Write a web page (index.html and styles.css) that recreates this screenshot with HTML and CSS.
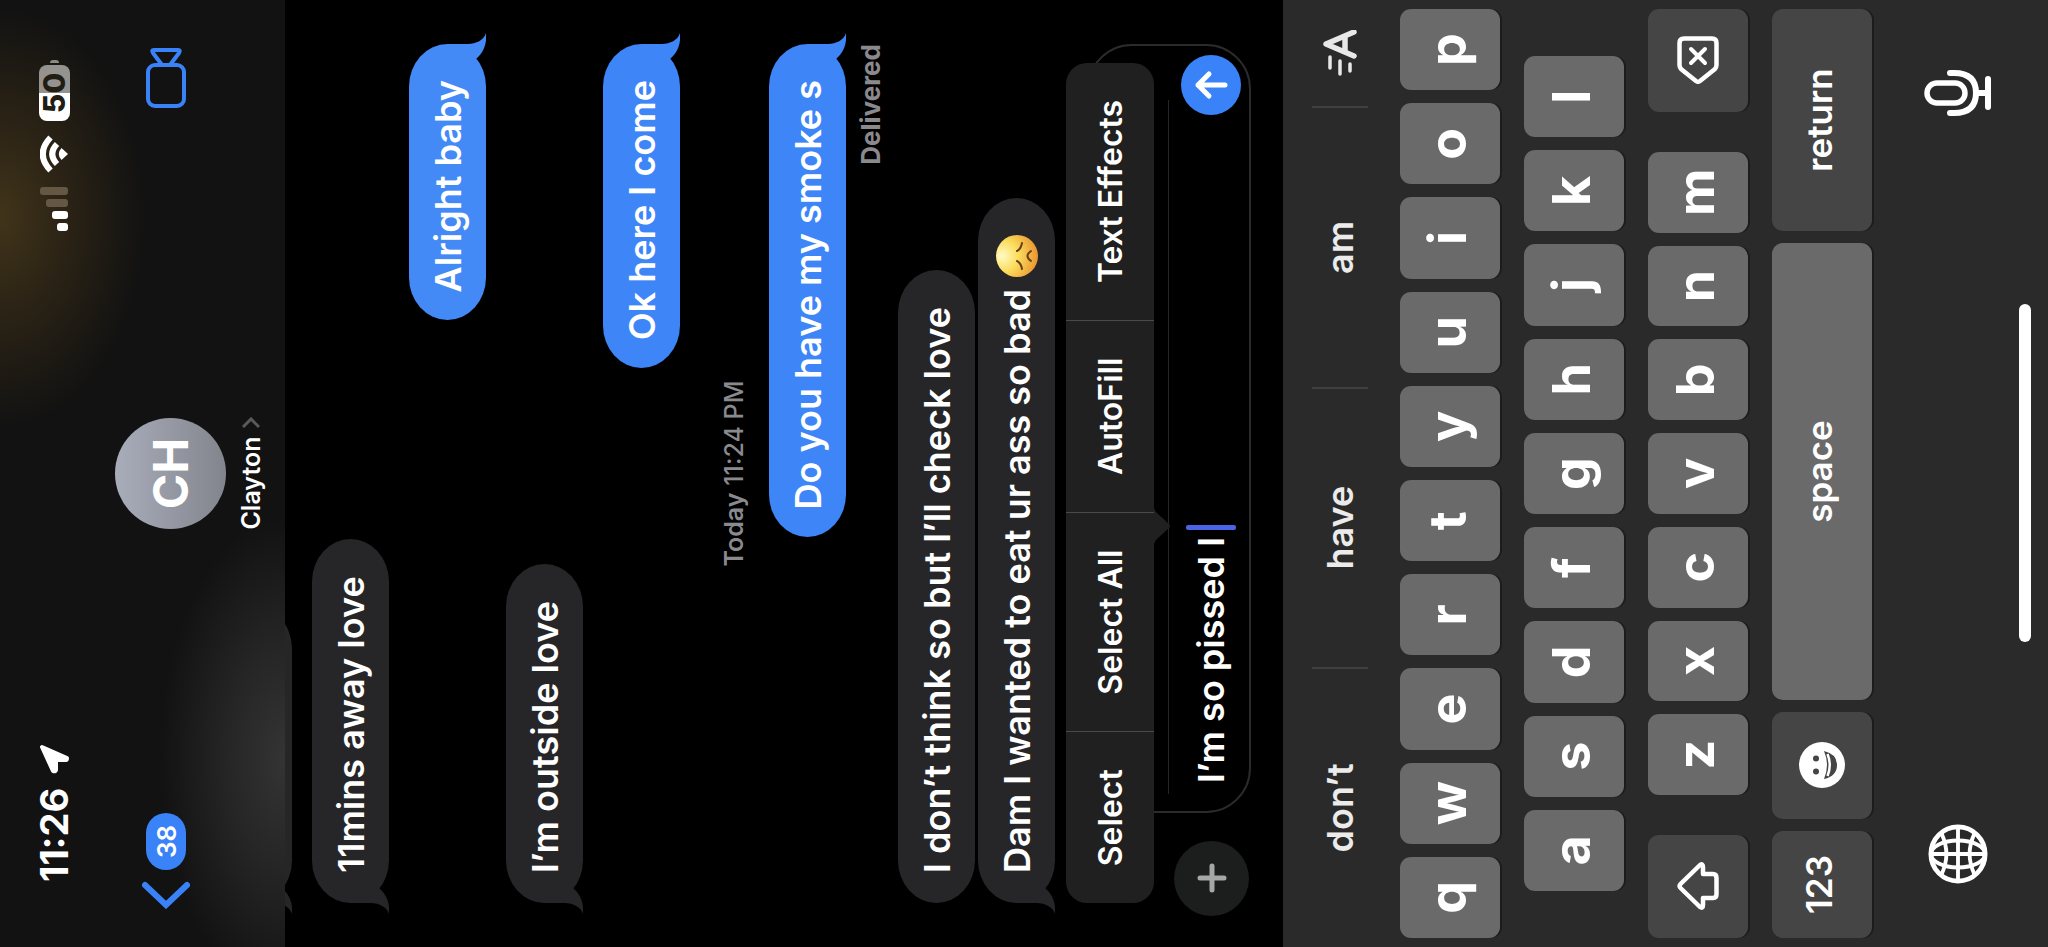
FILE: index.html
```html
<!DOCTYPE html>
<html lang="en">
<head>
<meta charset="utf-8">
<title>Clayton</title>
<link rel="stylesheet" href="styles.css">
</head>
<body>
<svg class="defs" width="0" height="0" aria-hidden="true">
  <symbol id="tail" viewBox="0 0 28 38"><path d="M0 0H17V20C17 28 21 36 28 38C18 39 9 36 3 29L0 26Z"/></symbol>
</svg>
<div class="stage">
<main class="phone">
  <header class="header">
    <div class="status">
      <time class="clock">11:26</time>
      <svg class="location" width="30" height="31" viewBox="0 0 30 31"><path d="M27 3 16 28Q14 28 14 27V17H4Q2 16 3 14Z" fill="#fff" stroke="#fff" stroke-width="4" stroke-linejoin="round"/></svg>
      <div class="indicators">
        <svg width="44" height="28" viewBox="0 0 44 28" fill="#fff"><rect y="17" width="8" height="11" rx="3"/><rect x="12" y="12" width="8" height="16" rx="3"/><g fill="#645844"><rect x="24" y="6" width="8" height="22" rx="3"/><rect x="36" width="8" height="28" rx="3"/></g></svg>
        <svg width="38" height="28" viewBox="0 0 38 28"><path d="M2.500 10.500Q19-5 35.500 10.500M9 17Q19 7.500 29 17" fill="none" stroke="#fff" stroke-width="6"/><path d="M19 28 13 21.500Q19 16 25 21.500Z" fill="#fff"/></svg>
        <div class="battery-wrap"><span class="battery">50</span><i class="battery-cap"></i></div>
      </div>
    </div>
    <nav class="nav">
      <button class="back" aria-label="Back, 38 unread">
        <svg width="28" height="48" viewBox="0 0 28 48"><path d="M24 3 4 24 24 45" fill="none" stroke="#3a82f7" stroke-width="6" stroke-linecap="round" stroke-linejoin="miter"/></svg>
        <span class="badge">38</span>
      </button>
      <button class="contact">
        <span class="avatar">CH</span>
        <span class="name">Clayton <svg width="11" height="18" viewBox="0 0 11 18"><path d="M1 1 9 9 1 17" fill="none" stroke="#5a5a5a" stroke-width="3"/></svg></span>
      </button>
      <button class="video" aria-label="Video call">
        <svg width="60" height="40" viewBox="0 0 60 40" fill="none" stroke="#3a82f7" stroke-width="4" stroke-linejoin="round"><rect x="2" y="2" width="41" height="36" rx="7"/><path d="M43 16 55 7Q58 5 58 8V32Q58 35 55 33L43 24"/></svg>
      </button>
    </nav>
  </header>

  <section class="thread">
    <p class="bubble in cut" aria-hidden="true"><svg class="tail"><use href="#tail"/></svg></p>
    <p class="bubble in">11mins away love<svg class="tail"><use href="#tail"/></svg></p>
    <p class="bubble out first">Alright baby<svg class="tail"><use href="#tail"/></svg></p>
    <p class="bubble in">I’m outside love<svg class="tail"><use href="#tail"/></svg></p>
    <p class="bubble out">Ok here I come<svg class="tail"><use href="#tail"/></svg></p>
    <p class="stamp"><b>Today</b> 11:24 PM</p>
    <p class="bubble out last">Do you have my smoke s<svg class="tail"><use href="#tail"/></svg></p>
    <p class="receipt">Delivered</p>
    <p class="bubble in stacked">I don’t think so but I’ll check love</p>
    <p class="bubble in stacked">Dam I wanted to eat ur ass so bad
      <svg class="emoji" width="42" height="42" viewBox="0 0 42 42" role="img" aria-label="disappointed face">
        <defs><radialGradient id="face" cx=".5" cy=".15" r=".85"><stop offset="0" stop-color="#fffbc4"/><stop offset=".45" stop-color="#fbdc5b"/><stop offset="1" stop-color="#ea9430"/></radialGradient></defs>
        <circle cx="21" cy="21" r="21" fill="url(#face)"/><path d="M8 26Q14 25 16 21M34 26Q28 25 26 21M16 35Q21 28 26 35" fill="none" stroke="#65401a" stroke-width="2" stroke-linecap="round"/>
      </svg><svg class="tail"><use href="#tail"/></svg></p>
  </section>

  <form class="composer">
    <button type="button" class="plus" aria-label="Add"><svg width="30" height="30" viewBox="0 0 30 30"><path d="M15 3V27M3 15H27" stroke="#a6a6a6" stroke-width="5" stroke-linecap="round"/></svg></button>
    <div class="field">
      <div class="subject"></div>
      <div class="entry">
        <input class="text" type="text" aria-label="Message" value="I’m so pissed I"><i class="caret"></i>
        <button type="button" class="send" aria-label="Send"><svg width="34" height="34" viewBox="0 0 34 34"><path d="M17 31V4M6 15 17 4 28 15" fill="none" stroke="#fff" stroke-width="5" stroke-linecap="round" stroke-linejoin="round"/></svg></button>
      </div>
    </div>
    <div class="menu">
      <button type="button">Select</button><button type="button">Select All</button><button type="button">AutoFill</button><button type="button">Text Effects</button>
      <svg class="pointer" width="40" height="17" viewBox="0 0 40 17"><path d="M0 0Q5 0 8 4L18 15Q20 17 22 15L32 4Q35 0 40 0Z" fill="#202020"/></svg>
    </div>
  </form>

  <section class="keyboard">
    <div class="suggestions">
      <button>don’t</button><button>have</button><button>am</button>
      <button class="format" aria-label="Text formatting"><svg width="46" height="34" viewBox="0 0 46 34" fill="none" stroke="#e8e8e8" stroke-linecap="round" stroke-linejoin="round"><path d="M20 31 32 3 44 31M24 22H40" stroke-width="5.500"/><path d="M8 7H19M2 17H15M5 27H12" stroke-width="3.500"/></svg></button>
    </div>
    <div class="row"><button class="key">q</button><button class="key">w</button><button class="key">e</button><button class="key">r</button><button class="key">t</button><button class="key">y</button><button class="key">u</button><button class="key">i</button><button class="key">o</button><button class="key">p</button></div>
    <div class="row inset"><button class="key">a</button><button class="key">s</button><button class="key">d</button><button class="key">f</button><button class="key">g</button><button class="key">h</button><button class="key">j</button><button class="key">k</button><button class="key">l</button></div>
    <div class="row shifted">
      <button class="key dark side" aria-label="Shift"><svg width="48" height="42" viewBox="0 0 48 42"><path d="M22 3.500Q24 1.500 26 3.500L45 23Q47 26 43 26H36V36Q36 39.500 32 39.500H16Q12 39.500 12 36V26H5Q1 26 3 23Z" fill="none" stroke="#fff" stroke-width="4.500" stroke-linejoin="round"/></svg></button>
      <div class="letters"><button class="key">z</button><button class="key">x</button><button class="key">c</button><button class="key">v</button><button class="key">b</button><button class="key">n</button><button class="key">m</button></div>
      <button class="key dark side" aria-label="Delete"><svg width="48" height="42" viewBox="0 0 48 42" fill="none" stroke="#fff" stroke-linecap="round" stroke-linejoin="round"><path d="M19 2.500H41Q45.500 2.500 45.500 7V35Q45.500 39.500 41 39.500H19Q17 39.500 15 38L3 23Q1.500 21 3 19L15 4Q17 2.500 19 2.500Z" stroke-width="4.500"/><path d="M21 14 35 28M35 14 21 28" stroke-width="4"/></svg></button>
    </div>
    <div class="row bottom">
      <button class="key dark word">123</button>
      <button class="key dark" aria-label="Emoji"><svg width="46" height="46" viewBox="0 0 46 46"><circle cx="23" cy="23" r="23" fill="#fff"/><g fill="#454545"><circle cx="16.500" cy="17" r="3"/><circle cx="29.500" cy="17" r="3"/><path d="M9 25Q23 31 37 25Q34 38 23 38Q12 38 9 25Z"/></g><path d="M12 28.500Q23 33 34 28.500" fill="none" stroke="#fff" stroke-width="2.500"/></svg></button>
      <button class="key word">space</button>
      <button class="key dark word">return</button>
    </div>
    <div class="dock">
      <button aria-label="Next keyboard"><svg width="60" height="60" viewBox="0 0 62 62" fill="none" stroke="#fff" stroke-width="4"><circle cx="31" cy="31" r="28" stroke-width="5"/><ellipse cx="31" cy="31" rx="14" ry="28"/><path d="M31 3V59M3 31H59M10 14Q31 24 52 14M10 48Q31 38 52 48"/></svg></button>
      <button aria-label="Dictate"><svg width="46" height="68" viewBox="0 0 46 68" fill="none" stroke="#fff" stroke-width="6" stroke-linecap="round"><rect x="13" y="3" width="20" height="38" rx="10" stroke-width="5.500"/><path d="M3 26V30Q3 52 23 52Q43 52 43 30V26M23 52V64M9 64H37"/></svg></button>
    </div>
    <div class="home"></div>
  </section>
</main>
</div>
</body>
</html>
```
FILE: styles.css
```css
* { box-sizing: border-box; }
body { margin: 0; background: #000; }
p { margin: 0; }
button { border: 0; padding: 0; margin: 0; background: none; color: inherit; font: inherit; display: flex; align-items: center; justify-content: center; }
svg { display: block; flex: none; }
.defs { position: absolute; }
.stage { height: 100vh; overflow: clip; }

/* The phone lies on its side: its width runs up the window. */
.phone {
  width: 100vh;
  height: 100vw;
  transform-origin: 0 0;
  transform: translateY(100vh) rotate(-90deg);
  display: flex;
  flex-direction: column;
  overflow: hidden;
  background: #000;
  color: #fff;
  font-family: Inter, "Liberation Sans", sans-serif;
  font-weight: 600;
}

/* Header */
.header {
  flex: none;
  height: 285px;
  padding-top: 38px;
  background:
    radial-gradient(ellipse 210px 145px at 77% 0, #41341a 0, #2b2315 45%, transparent),
    radial-gradient(ellipse 240px 125px at 20% 100%, #343434 0, #262626 45%, transparent),
    #121212;
}
.status { display: flex; align-items: center; height: 32px; padding: 0 60px 0 65px; }
.clock { font-size: 38px; font-weight: 700; }
.location { margin-left: 14px; }
.indicators { margin-left: auto; display: flex; align-items: center; gap: 14px; }
.battery-wrap { display: flex; align-items: center; gap: 2px; }
.battery {
  width: 56px; height: 31px; border-radius: 8px;
  display: flex; align-items: center; justify-content: center;
  background: linear-gradient(90deg, #fff 50%, #959390 50%);
  color: #211d14; font-size: 30px; font-weight: 800;
}
.battery-cap { width: 3px; height: 9px; border-radius: 0 4px 4px 0; background: #8d8a84; }
.nav { display: grid; grid-template-columns: 1fr auto 1fr; align-items: start; margin-top: 45px; padding: 0 38px; }
.back { height: 102px; gap: 11px; justify-self: start; }
.badge { height: 40px; padding: 0 12px; border-radius: 20px; background: #3a82f7; display: flex; align-items: center; font-size: 26px; }
.contact { flex-direction: column; gap: 9px; }
.avatar {
  width: 111px; height: 111px; border-radius: 50%;
  display: flex; align-items: center; justify-content: center;
  background: linear-gradient(#a9adba, #82858d);
  font-size: 48px; font-weight: 700;
}
.name { display: flex; align-items: center; gap: 8px; font-size: 25px; line-height: 32px; }
.video { height: 102px; padding-right: 10px; justify-self: end; }

/* Messages */
.thread { flex: 1; min-height: 0; overflow: hidden; display: flex; flex-direction: column; justify-content: flex-end; padding: 0 44px 32px; }
.bubble {
  flex: none; position: relative;
  display: flex; align-items: center; gap: 12px;
  height: 77px; margin-bottom: 20px; padding: 0 37px 0 30px;
  border-radius: 43px / 39px;
  font-size: 36px; white-space: nowrap;
}
.in { align-self: flex-start; background: #262628; }
.out { align-self: flex-end; background: #3e85f7; padding: 0 36px 0 28px; }
.first { background: #448af7; }
.cut { width: 297px; }
.tail { position: absolute; bottom: 0; width: 28px; height: 38px; }
.in .tail { left: -11px; fill: #262628; transform: scaleX(-1); }
.out .tail { right: -11px; fill: #3e85f7; }
.first .tail { fill: #448af7; }
.last { margin-bottom: 10px; }
.stamp, .receipt { flex: none; color: #8a8a8e; font-size: 25px; line-height: 30px; }
.stamp { align-self: center; margin: 19px 0 20px; font-weight: 500; }
.stamp b { font-weight: 600; }
.receipt { align-self: flex-end; font-size: 26px; font-weight: 700; margin-bottom: 12px; }
.stacked { margin-bottom: 3px; }
.stacked:last-child { margin-bottom: 0; }

/* Composer */
.composer { flex: none; position: relative; display: flex; align-items: flex-end; gap: 28px; padding: 0 44px 32px 31px; }
.plus { flex: none; width: 75px; height: 75px; margin-bottom: 2px; border-radius: 50%; background: #1c1d1d; }
.field { flex: 1; min-width: 0; border: 2px solid #2b2b2b; border-radius: 45px; }
.subject { height: 80px; margin: 0 54px 0 17px; border-bottom: 1px solid #262626; }
.entry { display: flex; align-items: center; height: 80px; padding: 4px 9px 0 28px; }
.text { field-sizing: content; min-width: 0; padding: 0; border: 0; outline: 0; background: none; color: #fff; font: inherit; font-size: 36px; }
.caret { flex: none; width: 5px; height: 50px; margin-left: 7px; border-radius: 2px; background: #4b64e6; }
.send { flex: none; width: 60px; height: 60px; margin-left: auto; border-radius: 50%; background: #3a82f7; }
.menu { position: absolute; top: -21px; left: 44px; right: 63px; height: 88px; display: flex; border-radius: 21px; background: #202020; }
.menu button { flex: 1 1 auto; padding: 0 36px; font-size: 32px; white-space: nowrap; }
.menu button + button { border-left: 1px solid #4a4a4a; }
.pointer { position: absolute; top: 100%; left: 357px; }

/* Keyboard */
.keyboard { flex: none; background: #2a2a2a; padding: 29px 9px 17px; }
.suggestions { display: flex; height: 56px; margin: 0 -9px 32px; color: #ebebeb; font-size: 36px; }
.suggestions button { flex: 280; }
.suggestions button + button { border-left: 2px solid #404040; }
.suggestions .format { flex: 107; }
.row { display: grid; grid-auto-flow: column; grid-auto-columns: 1fr; gap: 13px; height: 100px; margin-bottom: 24px; }
.inset { padding: 0 47px; }
.shifted { grid-template-columns: 103px 1fr 103px; gap: 40px; }
.letters { display: grid; grid-auto-flow: column; grid-auto-columns: 1fr; gap: 13px; }
.bottom { grid-template-columns: 107px 107px 1fr 222px; gap: 12px; }
.key { border-radius: 11px; background: #6a6a6a; box-shadow: 0 2px 0 #1c1c1c; font-size: 52px; font-weight: 700; line-height: 60px; padding-bottom: 4px; }
.dark { background: #454545; }
.key.word { font-size: 35px; font-weight: 600; padding-bottom: 6px; }
.key svg { margin-top: 4px; }
.dock { display: flex; justify-content: space-between; align-items: center; height: 68px; margin-top: 52px; padding: 0 61px 0 54px; }
.home { width: 338px; height: 12px; margin: 27px auto 0; border-radius: 6px; background: #fff; }
```
